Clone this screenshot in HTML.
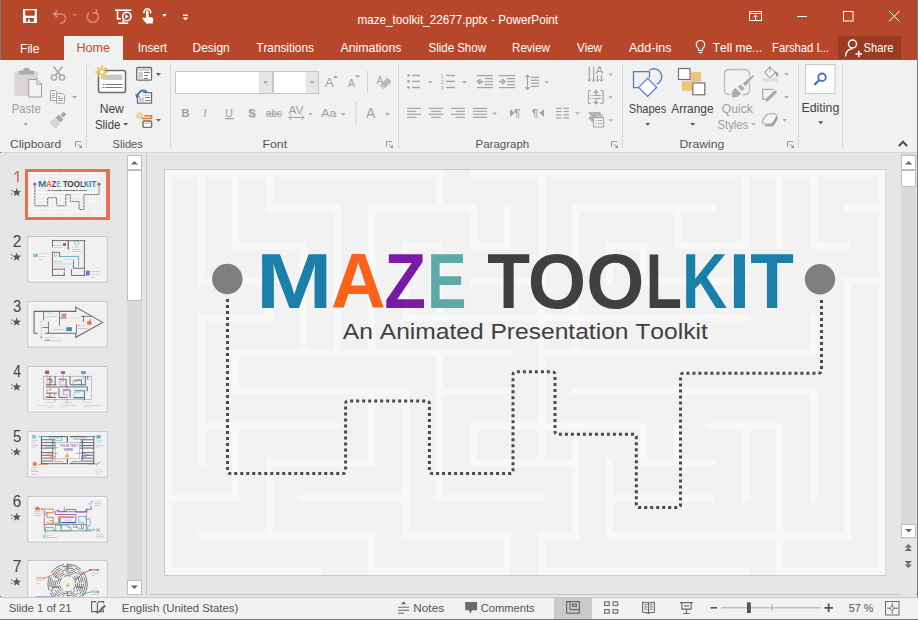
<!DOCTYPE html>
<html><head><meta charset="utf-8">
<style>
html,body{margin:0;padding:0;width:918px;height:620px;overflow:hidden;background:#E6E6E6}
svg{position:absolute;left:0;top:0;font-family:"Liberation Sans",sans-serif}
</style></head><body>
<svg width="918" height="620" viewBox="0 0 918 620">
<rect x="0" y="0" width="918" height="60" fill="#B7472A" />
<rect x="0" y="0" width="1" height="620" fill="#7A7A7A" />
<rect x="23" y="9" width="14" height="14" fill="#fff"/>
<path d="M25.2 10.2h9.6v4.8l-0.8 0.8h-8l-0.8-0.8z" fill="#B7472A"/>
<path d="M26 17.9h7.9v3.9h-3.9v-2.3h-2.1v2.3h-1.9z" fill="#B7472A"/>
<g stroke="#fff" stroke-opacity="0.3" fill="none" stroke-width="2"><path d="M54 14h7a4.5 4.5 0 0 1 0 9h-1"/><path d="M57.5 10.5L54 14l3.5 3.5"/></g>
<path d="M72.5 14h4.5l-2.25 2.48z" fill="rgba(255,255,255,0.3)"/>
<g stroke="#fff" stroke-opacity="0.3" fill="none" stroke-width="2"><path d="M96 12.2A5.6 5.6 0 1 1 89 12.6"/><path d="M96.5 9v4h-4"/></g>
<g stroke="#fff" fill="none" stroke-width="1.6"><path d="M115 10.2h16.5"/><path d="M117.5 10.5v8.3h3.5"/><circle cx="126.8" cy="16.5" r="4.2"/><path d="M118.2 23.2h10"/><path d="M122.5 20.5l1.8 2.5"/></g>
<path d="M125.3 14.3v4.4l3.5-2.2z" fill="#fff"/>
<g fill="none" stroke="#fff" stroke-width="1.5"><path d="M144.2 13.5a3.4 3.4 0 1 1 6.3 0"/></g>
<path d="M146 11.5a1.3 1.3 0 0 1 2.6 0v5.2l3.2 0.8c1 .3 1.6 1 1.5 2.1l-.6 4h-6.2l-3.6-4.2c-.6-.7-.4-1.6.5-1.8l2.6.5z" fill="#fff"/>
<path d="M162 14h4.8l-2.4 2.64z" fill="#fff"/>
<rect x="183" y="14.6" width="5" height="1.4" fill="#fff"/>
<path d="M182.8 17.5h5.4l-2.7 2.97z" fill="#fff"/>
<text transform="translate(357.42 24.20) scale(0.9767 1.0000)" font-size="12" fill="#fff" style="font-kerning:none">maze_toolkit_22677.pptx - PowerPoint</text>
<g fill="none" stroke="#fff" stroke-width="1"><rect x="749.5" y="11.5" width="12" height="9"/><path d="M749.5 13.5h12"/><path d="M755.5 20v-4.5M753.3 17.3l2.2-2.2 2.2 2.2"/><path d="M797 16.5h10"/><rect x="843.5" y="11.5" width="9.5" height="9.5"/><path d="M889 11l10.5 10.5M899.5 11L889 21.5"/></g>
<rect x="64" y="36" width="59" height="24" fill="#F1F1F1" />
<rect x="838" y="36" width="63" height="23" fill="#9A3A22" />
<text transform="translate(20.01 53.00) scale(0.9698 1.0000)" font-size="12.5" fill="#fff" style="font-kerning:none">File</text>
<text transform="translate(76.47 52.00) scale(1.0075 1.0000)" font-size="12.5" fill="#C8482A" style="font-kerning:none">Home</text>
<text transform="translate(137.72 52.00) scale(0.9395 1.0000)" font-size="12.5" fill="#fff" style="font-kerning:none">Insert</text>
<text transform="translate(192.52 52.00) scale(0.9576 1.0000)" font-size="12.5" fill="#fff" style="font-kerning:none">Design</text>
<text transform="translate(256.24 52.00) scale(0.9437 1.0000)" font-size="12.5" fill="#fff" style="font-kerning:none">Transitions</text>
<text transform="translate(340.48 52.00) scale(0.9860 1.0000)" font-size="12.5" fill="#fff" style="font-kerning:none">Animations</text>
<text transform="translate(428.48 52.00) scale(0.9194 1.0000)" font-size="12.5" fill="#fff" style="font-kerning:none">Slide Show</text>
<text transform="translate(512.05 52.00) scale(0.9252 1.0000)" font-size="12.5" fill="#fff" style="font-kerning:none">Review</text>
<text transform="translate(576.95 52.00) scale(0.9236 1.0000)" font-size="12.5" fill="#fff" style="font-kerning:none">View</text>
<text transform="translate(628.98 52.00) scale(1.0022 1.0000)" font-size="12.5" fill="#fff" style="font-kerning:none">Add-ins</text>
<text transform="translate(712.73 52.00) scale(0.9605 1.0000)" font-size="12.5" fill="#fff" style="font-kerning:none">Tell me...</text>
<text transform="translate(772.08 52.00) scale(0.9008 1.0000)" font-size="12.5" fill="#fff" style="font-kerning:none">Farshad I...</text>
<text transform="translate(863.49 52.00) scale(0.8997 1.0000)" font-size="12.5" fill="#fff" style="font-kerning:none">Share</text>
<g fill="none" stroke="#fff" stroke-width="1.2"><path d="M698.6 50.5v-1.7c-1.4-1-2.3-2.4-2.3-4.1a4.2 4.2 0 0 1 8.4 0c0 1.7-.9 3.1-2.3 4.1v1.7z"/><path d="M698.8 52.6h3.4"/></g>
<g fill="none" stroke="#fff" stroke-width="1.5"><circle cx="852.5" cy="44" r="4"/><path d="M845.5 56.5c0-4.5 3-7.5 6.5-7.8"/><path d="M855.5 54h6.5M858.8 50.7v6.5"/></g>
<rect x="0" y="60" width="918" height="92" fill="#F1F1F1" />
<rect x="1" y="152" width="916" height="1" fill="#D6D6D6" />
<rect x="86" y="64" width="1" height="84" fill="#D8D8D8" />
<rect x="170" y="64" width="1" height="84" fill="#D8D8D8" />
<rect x="398" y="64" width="1" height="84" fill="#D8D8D8" />
<rect x="622" y="64" width="1" height="84" fill="#D8D8D8" />
<rect x="798" y="64" width="1" height="84" fill="#D8D8D8" />
<rect x="842" y="64" width="1" height="84" fill="#D8D8D8" />
<text transform="translate(10.09 147.70) scale(1.0654 1.0000)" font-size="11.2" fill="#555" style="font-kerning:none">Clipboard</text>
<text transform="translate(112.49 147.70) scale(0.9969 1.0000)" font-size="11.2" fill="#555" style="font-kerning:none">Slides</text>
<text transform="translate(262.49 147.70) scale(1.0976 1.0000)" font-size="11.2" fill="#555" style="font-kerning:none">Font</text>
<text transform="translate(475.56 147.70) scale(1.0265 1.0000)" font-size="11.2" fill="#555" style="font-kerning:none">Paragraph</text>
<text transform="translate(679.50 147.70) scale(1.0928 1.0000)" font-size="11.2" fill="#555" style="font-kerning:none">Drawing</text>
<g fill="none" stroke="#9a9a9a" stroke-width="1"><path d="M75.5 147v-5.5h5.5"/><path d="M78 144l3.5 3.5"/></g><path d="M78.5 148h3.5v-3.5z" fill="#9a9a9a"/>
<g fill="none" stroke="#9a9a9a" stroke-width="1"><path d="M386.5 147v-5.5h5.5"/><path d="M389 144l3.5 3.5"/></g><path d="M389.5 148h3.5v-3.5z" fill="#9a9a9a"/>
<g fill="none" stroke="#9a9a9a" stroke-width="1"><path d="M611.5 147v-5.5h5.5"/><path d="M614 144l3.5 3.5"/></g><path d="M614.5 148h3.5v-3.5z" fill="#9a9a9a"/>
<g fill="none" stroke="#9a9a9a" stroke-width="1"><path d="M787.5 147v-5.5h5.5"/><path d="M790 144l3.5 3.5"/></g><path d="M790.5 148h3.5v-3.5z" fill="#9a9a9a"/>
<path d="M898.8 146l4.2-4.2 4.2 4.2" fill="none" stroke="#555" stroke-width="2.1"/>
<rect x="14.5" y="71" width="23.5" height="25" rx="2" fill="#D9D5D9"/>
<path d="M19 74.5v-2.8a1.2 1.2 0 0 1 1.2-1.2h3.3v-1.3a1.2 1.2 0 0 1 1.2-1.2h3.6a1.2 1.2 0 0 1 1.2 1.2v1.3h3.3a1.2 1.2 0 0 1 1.2 1.2v2.8z" fill="#ABABAB"/>
<path d="M28.8 79.5h8.2l4.5 4.5v13h-12.7z" fill="#F7F2F7" stroke="#A0A0A0" stroke-width="1"/><path d="M36.8 79.5v4.7h4.7" fill="none" stroke="#A0A0A0"/>
<text transform="translate(11.77 113.20) scale(0.9428 1.0000)" font-size="12" fill="#A0A0A0" style="font-kerning:none">Paste</text>
<path d="M23.2 123h5l-2.5 2.75z" fill="#A8A8A8"/>
<g fill="none" stroke="#A8A8A8" stroke-width="1.4"><circle cx="54" cy="77.5" r="2.6"/><circle cx="62" cy="77.5" r="2.6"/><path d="M55.5 75.3L62.5 66.5M60.5 75.3L53.5 66.5"/></g>
<g fill="#F6F2F6" stroke="#A4A4A4" stroke-width="1"><path d="M50.5 90.5h4.8l1.8 1.8v8.2h-6.6z"/><path d="M56.5 93.5h6l2 2v7.7h-8z"/></g>
<path d="M52 93.5h3M52 95.5h3M52 97.5h3M58 96.5h2M58 98.5h5M58 100.5h5" stroke="#A4A4A4" stroke-width="1"/>
<path d="M72 96h5l-2.5 2.75z" fill="#AAAAAA"/>
<g transform="translate(58.5 119.5) rotate(-45)"><path d="M-8.5 -4.6L-1.5 -3.3V3.3L-8.5 4.6z" fill="#D6D2D6"/><rect x="-1" y="-3.3" width="4.8" height="6.6" fill="#A8A8A8"/><rect x="4.6" y="-1.9" width="4.6" height="3.8" fill="#A8A8A8"/></g>
<rect x="98.5" y="70.5" width="27" height="22" rx="2" fill="#fff" stroke="#6E6E6E" stroke-width="1.6"/>
<rect x="102.5" y="74.5" width="20" height="5.5" fill="#C9C9C9" />
<path d="M102.5 84.5h2M105.5 84.5h17M102.5 87.5h2M105.5 87.5h17" stroke="#7a7a7a" stroke-width="1"/>
<g stroke="#F0C267" stroke-width="1.8" stroke-linecap="butt"><path d="M101.8 65.5v13M95.3 72h13M97.2 67.4l9.2 9.2M106.4 67.4l-9.2 9.2"/></g><circle cx="101.8" cy="72" r="3.2" fill="#F0C267"/><circle cx="101.8" cy="72" r="1.8" fill="#fff"/>
<text transform="translate(99.71 112.90) scale(1.0065 1.0000)" font-size="12" fill="#444" style="font-kerning:none">New</text>
<text transform="translate(94.88 128.70) scale(0.9568 1.0000)" font-size="12" fill="#444" style="font-kerning:none">Slide</text>
<path d="M123.3 123h4.8l-2.4 2.64z" fill="#555"/>
<rect x="136.7" y="67.5" width="14.8" height="12.6" rx="1.2" fill="#fff" stroke="#6E6E6E" stroke-width="1.3"/>
<rect x="138.3" y="69.1" width="11.8" height="1.7" fill="#C8C8C8" />
<rect x="138.2" y="72.1" width="4.6" height="6.5" fill="#CBCBCB" />
<path d="M144 72.5h5.8M144 75.5h4M144 78.4h4" stroke="#7a7a7a" stroke-width="1"/>
<path d="M155.7 73.1h5.4l-2.7 2.97z" fill="#666"/>
<path d="M143 92.6h8.5v10.6h-14v-6" fill="#fff" stroke="#6E6E6E" stroke-width="1.3"/>
<rect x="139" y="97.3" width="5" height="4.4" fill="#CBCBCB" />
<rect x="143" y="94.6" width="7" height="1.3" fill="#C8C8C8" />
<path d="M145 97.5h5M145 100.5h5" stroke="#7a7a7a" stroke-width="1"/>
<path d="M137.6 95.2c1.5-3 3.5-4.6 6-4.6 1.6 0 2.6.9 3.2 2.6" fill="none" stroke="#3F78C0" stroke-width="2"/><path d="M135.3 93.6l0.9 4.6 4.2-1.8z" fill="#3F78C0"/>
<g stroke="#F0C070" stroke-width="1.1"><path d="M139.5 112v7.2M135.9 115.6h7.2M137 113.1l5 5M142 113.1l-5 5"/></g><circle cx="139.5" cy="115.6" r="1.6" fill="#fff" stroke="#F0C070" stroke-width="1"/>
<path d="M144.2 115.8h7.3v2.8h-9.5" fill="none" stroke="#E87722" stroke-width="1.5"/>
<rect x="143" y="121" width="8.6" height="6.4" rx="1" fill="#fff" stroke="#6E6E6E" stroke-width="1.4"/>
<rect x="144.2" y="122.4" width="5.6" height="1.8" fill="#C8C8C8" />
<path d="M155.9 119h5l-2.5 2.75z" fill="#666"/>
<rect x="175.5" y="71.5" width="96.5" height="22" fill="#fff" stroke="#C6C6C6"/>
<rect x="259.5" y="72" width="12" height="21" fill="#E6E6E6" />
<rect x="259" y="72" width="1" height="21" fill="#E0E0E0" />
<path d="M263 81.2h5l-2.5 2.75z" fill="#A8A8A8"/>
<rect x="273.5" y="71.5" width="45" height="22" fill="#fff" stroke="#C6C6C6"/>
<rect x="305.5" y="72" width="12.5" height="21" fill="#E6E6E6" />
<path d="M309.5 81.2h5l-2.5 2.75z" fill="#A8A8A8"/>
<rect x="272" y="72" width="1.5" height="21" fill="#C6C6C6" />
<text x="325" y="87.4" font-size="13" fill="#A0A0A0">A</text><path d="M333 78l2.6-2.6 2.6 2.6z" fill="#A0A0A0"/>
<text x="348" y="87.4" font-size="10.5" fill="#A0A0A0">A</text><path d="M355 75.2h5.2l-2.6 2.6z" fill="#A0A0A0"/>
<rect x="367" y="71" width="1" height="22" fill="#D0D0D0" />
<text x="376.5" y="84" font-size="10" fill="#A0A0A0">A</text><path d="M381 84l6.5-6.5 4 4-6.5 6.5z" fill="#B8B8B8"/><path d="M379.5 85.5l1.5-1.5 4 4-1.5 1.5z" fill="#C8C8C8"/>
<text x="181.5" y="117" font-size="11" font-weight="bold" fill="#A0A0A0">B</text>
<text x="203.5" y="117" font-size="11" font-style="italic" fill="#A0A0A0">I</text>
<text x="225" y="117" font-size="11" fill="#A0A0A0">U</text>
<rect x="225" y="118" width="9" height="1.2" fill="#A0A0A0" />
<text x="249.3" y="118" font-size="11" font-weight="bold" fill="#D0D0D0">S</text><text x="248.3" y="117" font-size="11" font-weight="bold" fill="#A0A0A0">S</text>
<text x="266" y="117" font-size="10" fill="#A0A0A0" textLength="16" lengthAdjust="spacingAndGlyphs">abc</text>
<rect x="266" y="113.5" width="16.5" height="1" fill="#A0A0A0" />
<text x="288.5" y="113.6" font-size="10" fill="#A0A0A0" textLength="15" lengthAdjust="spacingAndGlyphs">AV</text><path d="M289 117.5h15M291.5 115l-2.5 2.5 2.5 2.5M301.5 115l2.5 2.5-2.5 2.5" fill="none" stroke="#A0A0A0" stroke-width="1"/>
<path d="M308.2 112.9h4.6l-2.3 2.53z" fill="#B0B0B0"/>
<text x="321.3" y="116.7" font-size="11.5" fill="#A0A0A0" textLength="15" lengthAdjust="spacingAndGlyphs">Aa</text>
<path d="M340.8 112.9h5l-2.5 2.75z" fill="#B0B0B0"/>
<rect x="355.5" y="102" width="1" height="22" fill="#D0D0D0" />
<text x="366" y="118" font-size="14" fill="#A0A0A0">A</text>
<path d="M385 112.9h5l-2.5 2.75z" fill="#B0B0B0"/>
<circle cx="408.5" cy="75.5" r="1.3" fill="#A4A4A4"/>
<rect x="412" y="74.8" width="8" height="1.4" fill="#A4A4A4" />
<circle cx="408.5" cy="81.4" r="1.3" fill="#A4A4A4"/>
<rect x="412" y="80.7" width="8" height="1.4" fill="#A4A4A4" />
<circle cx="408.5" cy="87.5" r="1.3" fill="#A4A4A4"/>
<rect x="412" y="86.8" width="8" height="1.4" fill="#A4A4A4" />
<path d="M428.1 81h4.6l-2.3 2.53z" fill="#B0B0B0"/>
<text x="440.5" y="78.3" font-size="6" fill="#A4A4A4">1</text>
<rect x="446" y="74.8" width="9" height="1.4" fill="#A4A4A4" />
<text x="440.5" y="84.2" font-size="6" fill="#A4A4A4">2</text>
<rect x="446" y="80.7" width="9" height="1.4" fill="#A4A4A4" />
<text x="440.5" y="90.3" font-size="6" fill="#A4A4A4">3</text>
<rect x="446" y="86.8" width="9" height="1.4" fill="#A4A4A4" />
<path d="M462 81h5l-2.5 2.75z" fill="#B0B0B0"/>
<rect x="477" y="75" width="16" height="1.2" fill="#A4A4A4" />
<rect x="477" y="87" width="16" height="1.2" fill="#A4A4A4" />
<rect x="485" y="78" width="8" height="1.2" fill="#A4A4A4" />
<rect x="485" y="81" width="8" height="1.2" fill="#A4A4A4" />
<rect x="485" y="84" width="8" height="1.2" fill="#A4A4A4" />
<path d="M483.5 81.6h-4M480.5 79l-3 2.6 3 2.6" fill="none" stroke="#A4A4A4" stroke-width="1.6"/>
<rect x="499" y="75" width="16" height="1.2" fill="#A4A4A4" />
<rect x="499" y="87" width="16" height="1.2" fill="#A4A4A4" />
<rect x="507" y="78" width="8" height="1.2" fill="#A4A4A4" />
<rect x="507" y="81" width="8" height="1.2" fill="#A4A4A4" />
<rect x="507" y="84" width="8" height="1.2" fill="#A4A4A4" />
<path d="M499 81.6h4M502 79l3 2.6-3 2.6" fill="none" stroke="#A4A4A4" stroke-width="1.6"/>
<path d="M527.5 75v14.5M525.3 77.3l2.2-2.3 2.2 2.3M525.3 87.2l2.2 2.3 2.2-2.3" fill="none" stroke="#A4A4A4" stroke-width="1.2"/>
<rect x="531" y="76.80000000000001" width="8" height="1.2" fill="#A4A4A4" />
<rect x="531" y="79.7" width="8" height="1.2" fill="#A4A4A4" />
<rect x="531" y="82.7" width="8" height="1.2" fill="#A4A4A4" />
<rect x="531" y="85.80000000000001" width="8" height="1.2" fill="#A4A4A4" />
<path d="M544.2 81.3h4.6l-2.3 2.53z" fill="#B0B0B0"/>
<path d="M589.3 67v14M593.6 67v14M597.5 75v6.5M601.5 75v6.5" stroke="#A4A4A4" stroke-width="1.2"/>
<path d="M587.8 79.5l1.5 2 1.5-2M592.1 79.5l1.5 2 1.5-2M596 79.5l1.5 2 1.5-2M600 79.5l1.5 2 1.5-2" fill="none" stroke="#A4A4A4" stroke-width="1"/>
<text transform="translate(595.78 74.20) scale(1.1160 1.1483)" font-size="10" fill="#A4A4A4" style="font-kerning:none">A</text>
<path d="M608.3 73.5h4.6l-2.3 2.53z" fill="#B0B0B0"/>
<path d="M591 90.5h-2.5v13h2.5M600.5 90.5h2.5v13h-2.5" fill="none" stroke="#A4A4A4" stroke-width="1"/>
<rect x="589" y="91" width="14" height="12" fill="#F4EEF4" />
<path d="M591 90.5h-2.5v13h2.5M600.5 90.5h2.5v13h-2.5" fill="none" stroke="#A4A4A4" stroke-width="1"/>
<path d="M596 90.5v4.5M593.8 92.8l2.2-2.2 2.2 2.2M596 99.5v4.5M593.8 101.8l2.2 2.2 2.2-2.2M592.8 95.5h8M592.8 98.5h8" fill="none" stroke="#A4A4A4" stroke-width="1.2"/><rect x="590" y="95" width="1" height="1" fill="#A4A4A4"/><rect x="590" y="98" width="1" height="1" fill="#A4A4A4"/>
<path d="M608.3 96.2h4.6l-2.3 2.53z" fill="#B0B0B0"/>
<path d="M588 112h12l3.5 4.5h-8v6.5h-2l-5.5-4.5 3-2.5z" fill="#B4B4B4"/>
<rect x="593.5" y="117.5" width="10" height="9.5" fill="#F4EEF4" stroke="#A4A4A4" stroke-width="1"/><path d="M595.5 120.5h1M598 120.5h4M595.5 123.5h1M598 123.5h4" stroke="#A4A4A4" stroke-width="0.9"/>
<path d="M608.3 119.3h4.6l-2.3 2.53z" fill="#B0B0B0"/>
<rect x="407" y="107.80000000000001" width="14" height="1.2" fill="#A4A4A4" />
<rect x="407" y="110.7" width="9.5" height="1.2" fill="#A4A4A4" />
<rect x="407" y="113.7" width="14" height="1.2" fill="#A4A4A4" />
<rect x="407" y="116.7" width="9.5" height="1.2" fill="#A4A4A4" />
<rect x="429.0" y="107.80000000000001" width="14" height="1.2" fill="#A4A4A4" />
<rect x="431.25" y="110.7" width="9.5" height="1.2" fill="#A4A4A4" />
<rect x="429.0" y="113.7" width="14" height="1.2" fill="#A4A4A4" />
<rect x="431.25" y="116.7" width="9.5" height="1.2" fill="#A4A4A4" />
<rect x="451" y="107.80000000000001" width="14" height="1.2" fill="#A4A4A4" />
<rect x="455.5" y="110.7" width="9.5" height="1.2" fill="#A4A4A4" />
<rect x="451" y="113.7" width="14" height="1.2" fill="#A4A4A4" />
<rect x="455.5" y="116.7" width="9.5" height="1.2" fill="#A4A4A4" />
<rect x="473" y="107.80000000000001" width="14" height="1.2" fill="#A4A4A4" />
<rect x="473" y="110.7" width="14" height="1.2" fill="#A4A4A4" />
<rect x="473" y="113.7" width="14" height="1.2" fill="#A4A4A4" />
<rect x="473" y="116.7" width="14" height="1.2" fill="#A4A4A4" />
<path d="M492.2 112.4h4.8l-2.4 2.64z" fill="#B0B0B0"/>
<path d="M510 109v8l4.5-4z" fill="#A4A4A4"/><text x="514" y="117" font-size="11" font-weight="bold" fill="#A4A4A4">¶</text>
<path d="M544 109v8l-4.5-4z" fill="#A4A4A4"/><text x="532" y="117" font-size="11" font-weight="bold" fill="#A4A4A4">¶</text>
<rect x="556" y="107.7" width="5.5" height="1.2" fill="#A4A4A4" />
<rect x="563.5" y="107.7" width="5.5" height="1.2" fill="#A4A4A4" />
<rect x="556" y="110.9" width="5.5" height="1.2" fill="#A4A4A4" />
<rect x="563.5" y="110.9" width="5.5" height="1.2" fill="#A4A4A4" />
<rect x="556" y="114.2" width="5.5" height="1.2" fill="#A4A4A4" />
<rect x="563.5" y="114.2" width="5.5" height="1.2" fill="#A4A4A4" />
<rect x="556" y="117.4" width="5.5" height="1.2" fill="#A4A4A4" />
<rect x="563.5" y="117.4" width="5.5" height="1.2" fill="#A4A4A4" />
<path d="M575 112.3h4.8l-2.4 2.64z" fill="#B0B0B0"/>
<path d="M649.5 71.6h-16v16h4.8" fill="none" stroke="#4A80C4" stroke-width="1.3"/>
<path d="M649.5 71.6v6.5" fill="none" stroke="#4A80C4" stroke-width="1.3"/>
<path d="M649.2 70.3A7.9 7.9 0 1 1 656.8 84" fill="none" stroke="#4A80C4" stroke-width="1.3"/>
<path d="M647.6 78.4l9 9-9 9-9-9z" fill="#fff" stroke="#4A80C4" stroke-width="1.3"/>
<text transform="translate(628.80 112.90) scale(0.9214 1.0000)" font-size="12" fill="#444" style="font-kerning:none">Shapes</text>
<path d="M645.3 123h4.8l-2.4 2.64z" fill="#555"/>
<rect x="678.5" y="68.5" width="11.5" height="11" fill="#fff" stroke="#707070" stroke-width="1.2"/>
<rect x="691" y="72" width="10" height="9.8" fill="#ECC47A" />
<rect x="682" y="81.2" width="10.2" height="9.6" fill="#ECC47A" />
<rect x="692.8" y="83" width="12" height="11.8" fill="#fff" stroke="#707070" stroke-width="1.2"/>
<text transform="translate(671.28 112.90) scale(0.9897 1.0000)" font-size="12" fill="#444" style="font-kerning:none">Arrange</text>
<path d="M690.2 123h5l-2.5 2.75z" fill="#555"/>
<rect x="724.5" y="69.5" width="25" height="25" rx="4.5" fill="#F4F0F4" stroke="#B8B8B8" stroke-width="1.3"/>
<g transform="translate(742 87) rotate(-45)"><path d="M-15 0c2-4 6-5 9-5l1.5 0v10l-1.5 0c-3 0-7-1-9-5z" fill="#ABABAB" stroke="#F1F1F1" stroke-width="1.6"/><rect x="-3.5" y="-3.6" width="5" height="7.2" fill="#ABABAB" stroke="#F1F1F1" stroke-width="1.4"/><path d="M2.5 -2.6L17 -1.2V1.2L2.5 2.6z" fill="#ABABAB" stroke="#F1F1F1" stroke-width="1.2"/></g>
<text transform="translate(721.82 112.70) scale(1.0158 1.0000)" font-size="12" fill="#A0A0A0" style="font-kerning:none">Quick</text>
<text transform="translate(717.59 128.60) scale(0.9401 1.0000)" font-size="12" fill="#A0A0A0" style="font-kerning:none">Styles</text>
<path d="M751.1 122.9h4.8l-2.4 2.64z" fill="#B0B0B0"/>
<path d="M770 67.2l5.2 5.2-5.2 5.2-5.2-5.2z" fill="#fff" stroke="#A8A8A8" stroke-width="1.2"/><path d="M769.8 66.5v6" stroke="#A8A8A8" stroke-width="1.2"/><path d="M774.6 71.2c2 0 3.8 1.6 3.8 3.2 0 1.2-.6 2.2-1.6 2.6z" fill="#A0A0A0"/>
<rect x="762.2" y="77.9" width="15.8" height="3.8" fill="#E4DEE4" />
<path d="M784.1 73h4.8l-2.4 2.64z" fill="#B0B0B0"/>
<path d="M773.4 89.4h-10.7v9.9h4.6" fill="none" stroke="#A8A8A8" stroke-width="1.2"/><path d="M766.3 98.6l8.6-8.6 2.2 2.2-8.6 8.6-2.9.8z" fill="#A8A8A8"/>
<path d="M784.1 96h4.8l-2.4 2.64z" fill="#B0B0B0"/>
<path d="M763.5 123.5c-1.4-1.2-1.2-3 .2-4.8l2.8-3.5c.9-1 1.9-1.4 3.2-1.4h4.3c2.2 0 3.2 1.8 2.2 3.5l-2.6 4.4c-.8 1.6-2 2.4-3.6 2.4h-4.5c-.8 0-1.4-.2-2-.6z" fill="#F4F0F4" stroke="#A8A8A8" stroke-width="1.1"/><path d="M769.8 124.6c1.6 0 2.8-.8 3.6-2.4l2.6-4.4c.5-.9.5-1.8.1-2.6l1.2 1.4c.6.8.6 1.9.1 2.9l-2.8 4.7c-.9 1.5-2.2 2.3-3.8 2.3h-4.8c-.8 0-1.4-.3-1.9-.8z" fill="#A0A0A0"/>
<path d="M782.3 119h4.8l-2.4 2.64z" fill="#B0B0B0"/>
<rect x="805.5" y="64.5" width="29.5" height="29" fill="#FDFDFD" stroke="#C9C9C9" stroke-width="1"/>
<circle cx="822" cy="77.3" r="3.8" fill="none" stroke="#3F70B6" stroke-width="1.8"/><path d="M819.3 80l-4.3 4.2" stroke="#3F70B6" stroke-width="2.3" stroke-linecap="round"/>
<text transform="translate(801.49 111.60) scale(1.0305 1.0000)" font-size="12" fill="#444" style="font-kerning:none">Editing</text>
<path d="M818.1 121.3h5.2l-2.6 2.86z" fill="#555"/>
<rect x="0" y="153" width="918" height="443" fill="#E6E6E6" />
<rect x="146" y="153" width="1" height="442" fill="#C8C8C8" />
<rect x="149" y="594" width="769" height="1" fill="#C6C6C6" />
<rect x="127" y="155" width="15" height="440" fill="#DADADA" />
<rect x="127.5" y="155.5" width="14" height="14" fill="#fff" stroke="#BFBFBF"/>
<path d="M130.8 164.5h7.2l-3.6-3.6z" fill="#666"/>
<rect x="127.5" y="170.5" width="14" height="130" fill="#fff" stroke="#BFBFBF"/>
<rect x="127.5" y="580.5" width="14" height="14" fill="#fff" stroke="#BFBFBF"/>
<path d="M130.8 585.5h7.2l-3.6 3.6z" fill="#666"/>
<rect x="901" y="153" width="15" height="443" fill="#DADADA" />
<rect x="901.5" y="155.5" width="14" height="14" fill="#fff" stroke="#BFBFBF"/>
<path d="M905 164.5h7.2l-3.6-3.6z" fill="#666"/>
<rect x="901.5" y="170.5" width="14" height="16" fill="#fff" stroke="#BFBFBF"/>
<rect x="901.5" y="524.5" width="14" height="13" fill="#fff" stroke="#BFBFBF"/>
<path d="M905 529h7.2l-3.6 3.6z" fill="#666"/>
<rect x="901" y="539" width="15" height="57" fill="#E6E6E6" />
<path d="M904.7 547.5l3.6-3.6 3.6 3.6zM904.7 551l3.6-3.6 3.6 3.6z" fill="#666"/>
<path d="M904.7 561l3.6 3.6 3.6-3.6zM904.7 564.5l3.6 3.6 3.6-3.6z" fill="#666"/>
<rect x="917" y="0" width="1" height="620" fill="#7A7A7A" />
<rect x="25" y="169" width="85" height="51" fill="#E9704E"/>
<g transform="translate(28 172) scale(0.1082 0.1108)"><rect x="1" y="1" width="720" height="405" fill="#EFEFEF"/>
<rect x="1" y="1" width="278" height="7" fill="#FCFCFC"/>
<rect x="306" y="1" width="415" height="7" fill="#FCFCFC"/>
<rect x="1" y="1" width="7" height="405" fill="#FCFCFC"/>
<rect x="715" y="1" width="6" height="405" fill="#FCFCFC"/>
<rect x="1" y="399" width="156" height="7" fill="#FCFCFC"/>
<rect x="204" y="399" width="143" height="7" fill="#FCFCFC"/>
<rect x="374" y="399" width="211" height="7" fill="#FCFCFC"/>
<rect x="612" y="399" width="109" height="7" fill="#FCFCFC"/>
<path d="M37.5 4.5L37.5 112.31M105.5 112.31L105.5 148.58M71.5 4.5L71.5 76.04M139.5 76.04L139.5 184.85M105.5 4.5L105.5 39.77M173.5 39.77L173.5 184.85M207.5 39.77L207.5 184.85M275.5 4.5L275.5 39.77M309.5 39.77L309.5 76.04M343.5 39.77L343.5 76.04M377.5 4.5L377.5 112.31M411.5 39.77L411.5 184.85M513.5 39.77L513.5 76.04M445.5 76.04L445.5 112.31M479.5 76.04L479.5 112.31M581.5 4.5L581.5 76.04M615.5 4.5L615.5 76.04M649.5 4.5L649.5 76.04M683.5 112.31L683.5 366.2M37.5 148.58L37.5 257.39M71.5 184.85L71.5 221.12M275.5 184.85L275.5 329.93M377.5 112.31L377.5 293.66M649.5 148.58L649.5 184.85M649.5 221.12L649.5 329.93M37.5 257.39L37.5 293.66M71.5 257.39L71.5 329.93M105.5 293.66L105.5 366.2M207.5 221.12L207.5 293.66M241.5 76.04L241.5 148.58M275.5 76.04L275.5 148.58M207.5 366.2L207.5 401.5M241.5 221.12L241.5 366.2M309.5 257.39L309.5 293.66M343.5 366.2L343.5 401.5M411.5 257.39L411.5 366.2M479.5 257.39L479.5 293.66M513.5 257.39L513.5 293.66M445.5 293.66L445.5 366.2M377.5 366.2L377.5 401.5M581.5 257.39L581.5 329.93M615.5 257.39L615.5 401.5M37.5 112.31L105.5 112.31M71.5 76.04L139.5 76.04M105.5 39.77L173.5 39.77M207.5 39.77L309.5 39.77M309.5 76.04L343.5 76.04M241.5 76.04L275.5 76.04M309.5 112.31L377.5 112.31M411.5 39.77L547.5 39.77M513.5 76.04L581.5 76.04M445.5 76.04L479.5 76.04M479.5 112.31L581.5 112.31M649.5 76.04L683.5 76.04M683.5 39.77L716.5 39.77M683.5 112.31L716.5 112.31M37.5 148.58L105.5 148.58M71.5 184.85L343.5 184.85M71.5 221.12L241.5 221.12M37.5 257.39L173.5 257.39M309.5 257.39L479.5 257.39M547.5 257.39L615.5 257.39M241.5 148.58L581.5 148.58M377.5 184.85L649.5 184.85M275.5 221.12L343.5 221.12M411.5 221.12L649.5 221.12M4.5 329.93L71.5 329.93M105.5 293.66L207.5 293.66M139.5 329.93L241.5 329.93M37.5 366.2L207.5 366.2M241.5 366.2L343.5 366.2M275.5 329.93L377.5 329.93M309.5 293.66L411.5 293.66M479.5 293.66L547.5 293.66M445.5 329.93L547.5 329.93M377.5 366.2L411.5 366.2M445.5 366.2L683.5 366.2" stroke="#FCFCFC" stroke-width="7" stroke-linecap="square" fill="none"/>
<path d="M63.50 130.00 L63.50 301.50 Q63.50 304.50 66.50 304.50 L178.60 304.50 Q181.60 304.50 181.60 301.50 L181.60 234.90 Q181.60 231.90 184.60 231.90 L262.40 231.90 Q265.40 231.90 265.40 234.90 L265.40 301.50 Q265.40 304.50 268.40 304.50 L346.00 304.50 Q349.00 304.50 349.00 301.50 L349.00 205.80 Q349.00 202.80 352.00 202.80 L388.00 202.80 Q391.00 202.80 391.00 205.80 L391.00 262.30 Q391.00 265.30 394.00 265.30 L469.30 265.30 Q472.30 265.30 472.30 268.30 L472.30 335.50 Q472.30 338.50 475.30 338.50 L513.50 338.50 Q516.50 338.50 516.50 335.50 L516.50 207.20 Q516.50 204.20 519.50 204.20 L654.50 204.20 Q657.50 204.20 657.50 201.20 L657.50 130.00" fill="none" stroke="#707070" stroke-width="9" stroke-dasharray="22 6"/>
<circle cx="63.30000000000001" cy="110" r="15.2" fill="#7F7F7F"/>
<circle cx="656" cy="110.30000000000001" r="15.2" fill="#7F7F7F"/>
<text transform="translate(92.06 138.60) scale(1.2408 1.0548)" font-size="74" fill="#1B80A9" font-weight="bold" style="font-kerning:none">M</text>
<text transform="translate(167.01 138.60) scale(1.0232 1.0548)" font-size="74" fill="#FB6118" font-weight="bold" style="font-kerning:none">A</text>
<text transform="translate(220.27 138.60) scale(0.9225 1.0548)" font-size="74" fill="#781CA8" font-weight="bold" style="font-kerning:none">Z</text>
<text transform="translate(263.18 138.60) scale(0.7925 1.0548)" font-size="74" fill="#5DAAA9" font-weight="bold" style="font-kerning:none">E</text>
<text transform="translate(323.21 138.60) scale(0.9455 1.0548)" font-size="74" fill="#404040" font-weight="bold" style="font-kerning:none">T</text>
<text transform="translate(363.72 138.60) scale(1.0152 1.0548)" font-size="74" fill="#404040" font-weight="bold" style="font-kerning:none">O</text>
<text transform="translate(422.34 138.60) scale(1.0094 1.0548)" font-size="74" fill="#404040" font-weight="bold" style="font-kerning:none">O</text>
<text transform="translate(481.84 138.60) scale(0.8005 1.0548)" font-size="74" fill="#404040" font-weight="bold" style="font-kerning:none">L</text>
<text transform="translate(518.11 138.60) scale(0.8472 1.0548)" font-size="74" fill="#1B80A9" font-weight="bold" style="font-kerning:none">K</text>
<text transform="translate(564.75 138.60) scale(1.0414 1.0548)" font-size="74" fill="#1B80A9" font-weight="bold" style="font-kerning:none">I</text>
<text transform="translate(586.20 138.60) scale(0.9661 1.0548)" font-size="74" fill="#1B80A9" font-weight="bold" style="font-kerning:none">T</text>
<text stroke="#5A5A5A" stroke-width="1.5" transform="translate(178.85 170.40) scale(1.0694 0.9480)" font-size="23" fill="#5A5A5A" style="font-kerning:none">An Animated Presentation Toolkit</text></g>
<path d="M17.9 171v11M17.9 171.4l-3.6 3" fill="none" stroke="#D24726" stroke-width="1.2"/>
<polygon points="16.70,188.00 17.88,190.98 21.07,191.18 18.60,193.22 19.40,196.32 16.70,194.60 14.00,196.32 14.80,193.22 12.33,191.18 15.52,190.98" fill="#5A5A5A"/>
<rect x="11.00" y="190.00" width="1.3" height="1.1" fill="#6A6A6A"/><rect x="11.00" y="193.40" width="1.3" height="1.1" fill="#6A6A6A"/>
<defs><clipPath id="clip7"><rect x="0" y="0" width="918" height="425"/></clipPath></defs><g transform="translate(24 232) scale(0.09588)"><rect x="35" y="42" width="838" height="485" fill="#C6C6C6"/><rect x="46" y="53" width="816" height="463" fill="#FAFAFA"/><rect x="62" y="68" width="784" height="433" fill="#F1F1F1"/><path d="M297 88L297 155M297 210L297 455M297 90L635 90M630 90L630 378M297 453L420 453M495 453L635 453M630 400L630 453M297 212L372 212L372 255M515 300L515 378L630 378M297 388L405 388M420 378L420 405M495 395L495 440M420 425L420 453" fill="none" stroke="#5E5E5E" stroke-width="9" stroke-linecap="square"/><rect x="455" y="90" width="12" height="95" fill="#5E5E5E"/><path d="M372 255L570 255L570 355" fill="none" stroke="#3E9BC2" stroke-width="8" stroke-linecap="square"/><rect x="405" y="322" width="105" height="20" fill="#D6E6EC"/><rect x="95" y="228" width="45" height="30" fill="#5AA5C8"/><rect x="103" y="236" width="14" height="14" fill="#EAF4F8"/><rect x="645" y="403" width="40" height="50" fill="#9A63C8"/><rect x="408" y="115" width="30" height="30" fill="#C0504D"/><path d="M525 100h45v25l-22 18-23-18z" fill="none" stroke="#6AB8B5" stroke-width="7"/><path d="M320 228a14 16 0 1 0 22 2" fill="none" stroke="#E5824F" stroke-width="7"/><rect x="305" y="140" width="90" height="6" fill="#A9A9A9"/><rect x="305" y="160" width="100" height="6" fill="#C6B9A8"/><rect x="500" y="180" width="90" height="6" fill="#B0B0B0"/><rect x="500" y="200" width="100" height="6" fill="#B8A8C0"/><rect x="305" y="305" width="90" height="6" fill="#A9A9A9"/><rect x="305" y="330" width="100" height="6" fill="#B8B8B8"/><rect x="150" y="220" width="95" height="6" fill="#B6CCD8"/><rect x="150" y="252" width="90" height="6" fill="#C8C8B8"/><rect x="150" y="282" width="45" height="6" fill="#A6B0C8"/><rect x="690" y="410" width="100" height="6" fill="#B8A8C8"/><rect x="690" y="440" width="100" height="6" fill="#C8C8C8"/><rect x="700" y="470" width="40" height="6" fill="#C0C0C0"/><rect x="420" y="283" width="110" height="6" fill="#C6C6C6"/><rect x="305" y="355" width="110" height="6" fill="#D0C8C0"/><rect x="500" y="155" width="70" height="6" fill="#9ED0CC"/></g>
<g transform="translate(24 297) scale(0.09588)"><rect x="35" y="42" width="838" height="485" fill="#C6C6C6"/><rect x="46" y="53" width="816" height="463" fill="#FAFAFA"/><rect x="62" y="68" width="784" height="433" fill="#F1F1F1"/><path d="M220 378H540V420L820 265L540 105V150H105V378H145" fill="none" stroke="#686868" stroke-width="11"/><path d="M370 150L370 295M370 220L440 220M255 262L255 378M200 318L255 318M205 150L205 240M600 202L700 202M620 202L620 255M548 290L548 378" fill="none" stroke="#6A6A6A" stroke-width="9" stroke-linecap="square"/><path d="M180 250V430" stroke="#8A8A8A" stroke-width="6" stroke-dasharray="18 14"/><rect x="392" y="172" width="48" height="38" fill="#D9A0A8"/><rect x="400" y="180" width="6" height="28" fill="#C0504D"/><rect x="414" y="186" width="6" height="22" fill="#C0504D"/><rect x="428" y="176" width="6" height="32" fill="#C0504D"/><rect x="440" y="315" width="60" height="40" fill="#3F8FB5"/><path d="M660 255h18l8-25 10 5-4 20h12v35h-44z" fill="#E0693A"/><rect x="565" y="290" width="15" height="12" fill="#E07030"/><rect x="215" y="445" width="55" height="14" fill="#B58AD0"/><rect x="175" y="405" width="10" height="25" fill="#A878C8"/><rect x="225" y="200" width="115" height="6" fill="#B8B8C0"/><rect x="305" y="338" width="110" height="6" fill="#B8B0B0"/><rect x="460" y="215" width="120" height="6" fill="#C8C8C8"/><rect x="565" y="325" width="95" height="6" fill="#A0A0B8"/><rect x="280" y="455" width="115" height="6" fill="#B0B8B8"/><rect x="220" y="420" width="90" height="6" fill="#C8B8D8"/><rect x="235" y="165" width="60" height="6" fill="#C0C0C8"/><rect x="600" y="293" width="40" height="6" fill="#F0A890"/></g>
<g transform="translate(24 362) scale(0.09588)"><rect x="35" y="42" width="838" height="485" fill="#C6C6C6"/><rect x="46" y="53" width="816" height="463" fill="#FAFAFA"/><rect x="62" y="68" width="784" height="433" fill="#F1F1F1"/><rect x="202" y="148" width="505" height="244" fill="none" stroke="#8A8A8A" stroke-width="5"/><path d="M232 237L335 237M270 152L270 237M250 180L290 180L290 212M365 180L440 180L440 260M325 152L325 237M480 152L480 237L640 237M520 190L600 190L600 237M640 152L640 237M232 260L640 260M232 325L340 325M270 325L270 370M365 280L365 370L440 370M410 292L480 292L480 370M530 300L630 300L630 390M520 370L630 370M665 152L665 180M232 370L330 370M660 260L660 300" fill="none" stroke="#5A5A5A" stroke-width="9" stroke-linecap="square"/><path d="M240 140L240 250L280 250L280 290L240 290L240 330L320 330L320 410M230 360L290 360" fill="none" stroke="#D88088" stroke-width="7" stroke-linecap="square"/><path d="M410 140L410 200L370 200L370 240L450 240L450 300L410 300L410 340L450 340L450 410" fill="none" stroke="#B080D0" stroke-width="7" stroke-linecap="square"/><path d="M620 140L620 180L560 180L560 200L510 200L510 250L650 250L650 300L580 300L580 320L520 320L520 380L620 380L620 410" fill="none" stroke="#7AB8D8" stroke-width="7" stroke-linecap="square"/><path d="M220 90h42v35h-42z" fill="#C0504D"/><path d="M385 95h43v30h-43z" fill="#9A5FC8"/><path d="M595 95h50v30h-50z" fill="#5AA5C8"/><rect x="220" y="418" width="95" height="6" fill="#E8B8B8"/><rect x="145" y="448" width="170" height="6" fill="#D0C8B8"/><rect x="250" y="468" width="70" height="6" fill="#C8D0D8"/><rect x="410" y="418" width="90" height="6" fill="#C8B8E0"/><rect x="375" y="448" width="175" height="6" fill="#C8C0B0"/><rect x="375" y="468" width="70" height="6" fill="#D0D0D0"/><rect x="630" y="418" width="95" height="6" fill="#B0D0E0"/><rect x="630" y="448" width="175" height="6" fill="#C0C0C0"/><rect x="630" y="468" width="70" height="6" fill="#D0D0D8"/></g>
<g transform="translate(24 427) scale(0.09588)"><rect x="35" y="42" width="838" height="485" fill="#C6C6C6"/><rect x="46" y="53" width="816" height="463" fill="#FAFAFA"/><rect x="62" y="68" width="784" height="433" fill="#F1F1F1"/><rect x="182" y="98" width="546" height="286" fill="#F4F4F4"/><path d="M182 100L435 100M480 100L728 100M182 382L435 382M480 382L728 382M182 100L182 240M182 255L182 382M728 100L728 240M728 255L728 382" fill="none" stroke="#555" stroke-width="10" stroke-linecap="square"/><rect x="446" y="95" width="12" height="60" fill="#555"/><rect x="446" y="330" width="12" height="60" fill="#555"/><rect x="186" y="128" width="140" height="10" fill="#666"/><rect x="582" y="128" width="142" height="10" fill="#666"/><rect x="186" y="158" width="140" height="10" fill="#666"/><rect x="582" y="158" width="142" height="10" fill="#666"/><rect x="186" y="188" width="140" height="10" fill="#666"/><rect x="582" y="188" width="142" height="10" fill="#666"/><rect x="186" y="215" width="140" height="10" fill="#666"/><rect x="582" y="215" width="142" height="10" fill="#666"/><rect x="186" y="262" width="120" height="10" fill="#6a6a6a"/><rect x="600" y="262" width="124" height="10" fill="#6a6a6a"/><rect x="186" y="290" width="120" height="10" fill="#6a6a6a"/><rect x="600" y="290" width="124" height="10" fill="#6a6a6a"/><rect x="186" y="320" width="120" height="10" fill="#6a6a6a"/><rect x="600" y="320" width="124" height="10" fill="#6a6a6a"/><rect x="186" y="350" width="120" height="10" fill="#6a6a6a"/><rect x="600" y="350" width="124" height="10" fill="#6a6a6a"/><rect x="330" y="160" width="250" height="172" fill="#F6F6F6" stroke="#9a9a9a" stroke-width="6"/><path d="M300 140L300 335M610 140L610 335" fill="none" stroke="#555" stroke-width="8" stroke-linecap="square"/><text x="372" y="210" font-size="34" font-weight="bold" fill="#9A7CA8">YOUR TEXT</text><text x="415" y="255" font-size="34" font-weight="bold" fill="#7A7AA8">HERE</text><path d="M430 290h14l6-25 10 4-3 21h12v28h-39z" fill="#E8B43C"/><path d="M150 100L260 100L260 115L400 115L400 140L320 140L320 200L230 200L230 215L350 215M500 115L650 115L650 100L760 100M520 130L600 130L600 210L690 210" fill="none" stroke="#6DB3C8" stroke-width="7" stroke-linecap="square"/><path d="M150 390L250 390L250 380L400 380L400 360L320 360L320 310L270 310L270 290L230 290L230 300M250 275L350 275" fill="none" stroke="#E8804F" stroke-width="7" stroke-linecap="square"/><path d="M760 385L660 385L660 380L500 380L500 360L600 360L600 310L650 310L650 290L680 290M545 275L640 275" fill="none" stroke="#9A60C8" stroke-width="7" stroke-linecap="square"/><circle cx="112" cy="385" r="22" fill="#E8804F"/><rect x="85" y="85" width="40" height="35" fill="#8AC8D0"/><rect x="755" y="85" width="45" height="35" fill="#6AAFC8"/><path d="M755 395l45-35" stroke="#9A60C8" stroke-width="8"/><rect x="78" y="138" width="70" height="6" fill="#A8C8D0"/><rect x="78" y="160" width="45" height="6" fill="#D0C8A8"/><rect x="78" y="188" width="80" height="6" fill="#B8B0C0"/><rect x="78" y="208" width="45" height="6" fill="#C0C8D0"/><rect x="755" y="138" width="60" height="6" fill="#A8C8D8"/><rect x="755" y="160" width="45" height="6" fill="#D0C8A8"/><rect x="755" y="188" width="80" height="6" fill="#C0B0C0"/><rect x="755" y="208" width="40" height="6" fill="#C8C8D0"/><rect x="75" y="418" width="65" height="6" fill="#F0A890"/><rect x="75" y="440" width="50" height="6" fill="#C8C8C8"/><rect x="75" y="462" width="80" height="6" fill="#A0A0B0"/><rect x="75" y="490" width="50" height="6" fill="#A8A8C0"/><rect x="745" y="438" width="60" height="6" fill="#C8C0E0"/><rect x="745" y="465" width="80" height="6" fill="#C8B8D0"/><rect x="745" y="488" width="40" height="6" fill="#C0C0D8"/></g>
<g transform="translate(24 492) scale(0.09588)"><rect x="35" y="42" width="838" height="485" fill="#C6C6C6"/><rect x="46" y="53" width="816" height="463" fill="#FAFAFA"/><rect x="62" y="68" width="784" height="433" fill="#F1F1F1"/><path d="M212 185L212 405L700 405M212 340L370 340M370 270L370 340L650 340M355 205L655 205M650 240L650 405M420 165L420 205M545 340L545 370M600 345L600 380M232 210L232 240M272 300L300 300M655 180L655 215M390 355L390 375" fill="none" stroke="#666" stroke-width="7" stroke-linecap="square"/><path d="M185 178L305 178L305 215L240 215L240 265L305 265L305 325L245 325L245 320M305 325L360 325L360 258L515 258" fill="none" stroke="#E8783A" stroke-width="9" stroke-linecap="square"/><path d="M700 150L700 182L645 182L645 210L540 210L540 182L440 182L440 205L360 205L360 185L325 205L325 235L540 235L540 320L395 320" fill="none" stroke="#9A4CC8" stroke-width="9" stroke-linecap="square"/><path d="M395 318L535 318" fill="none" stroke="#3A3AA8" stroke-width="9" stroke-linecap="square"/><path d="M225 430L225 370L305 370L305 405L330 405L330 345L385 345L385 405L490 405L490 370L460 370L460 345L380 345L380 265L520 265" fill="none" stroke="#4AA8A8" stroke-width="8" stroke-linecap="square"/><path d="M730 395L665 395L665 350L690 350L690 285L645 285L645 255L570 255L570 320L620 320L620 385L570 385L570 370L515 370L515 330" fill="none" stroke="#5AAAD0" stroke-width="8" stroke-linecap="square"/><path d="M115 170l25-22 25 22v20h-50z" fill="#E8783A"/><rect x="178" y="170" width="18" height="16" fill="#E8783A"/><path d="M672 118l14 14 30-40" fill="none" stroke="#B080D8" stroke-width="10"/><path d="M752 378l40 36M792 378l-40 36" stroke="#5AA0C8" stroke-width="8"/><circle cx="728" cy="395" r="8" fill="#3E90C0"/><path d="M205 445v40M220 445v40M240 445v40" stroke="#5AAAA8" stroke-width="6"/><rect x="105" y="200" width="65" height="6" fill="#F0A888"/><rect x="105" y="218" width="80" height="6" fill="#B8B8B8"/><rect x="105" y="240" width="65" height="6" fill="#A8A8B8"/><rect x="735" y="95" width="65" height="6" fill="#C8B8E0"/><rect x="735" y="118" width="70" height="6" fill="#B0B0B0"/><rect x="735" y="138" width="55" height="6" fill="#A8A8B8"/><rect x="755" y="445" width="70" height="6" fill="#B8B8C8"/><rect x="755" y="465" width="80" height="6" fill="#A0A8B8"/><rect x="250" y="450" width="60" height="6" fill="#A8D0D0"/><rect x="250" y="470" width="100" height="6" fill="#B0B0B0"/><rect x="665" y="265" width="40" height="6" fill="#C8C8C8"/><rect x="420" y="290" width="80" height="6" fill="#B8A8A8"/></g>
<g transform="translate(24 556) scale(0.09588)" clip-path="url(#clip7)"><rect x="35" y="42" width="838" height="485" fill="#C6C6C6"/><rect x="46" y="53" width="816" height="463" fill="#FAFAFA"/><rect x="62" y="68" width="784" height="433" fill="#F1F1F1"/><circle cx="455" cy="290" r="205" fill="none" stroke="#555" stroke-width="8" stroke-dasharray="160 30"/><circle cx="455" cy="290" r="185" fill="none" stroke="#555" stroke-width="8" stroke-dasharray="110 25"/><circle cx="455" cy="290" r="165" fill="none" stroke="#555" stroke-width="8" stroke-dasharray="120 28"/><circle cx="455" cy="290" r="145" fill="none" stroke="#555" stroke-width="8" stroke-dasharray="80 22"/><circle cx="455" cy="290" r="125" fill="none" stroke="#555" stroke-width="8" stroke-dasharray="90 24"/><circle cx="455" cy="290" r="105" fill="none" stroke="#555" stroke-width="8" stroke-dasharray="60 20"/><circle cx="455" cy="290" r="85" fill="none" stroke="#555" stroke-width="8" stroke-dasharray="70 20"/><path d="M455 90L455 140M330 215L380 245M580 215L530 245M300 330L360 320M610 330L550 320M455 420L455 380" fill="none" stroke="#5A5A5A" stroke-width="8" stroke-linecap="square"/><path d="M440 300h12l5-20 9 3-3 17h10v22h-33z" fill="#E8B43C"/><path d="M130 232L210 232L330 185" fill="none" stroke="#E8783A" stroke-width="8" stroke-linecap="square"/><circle cx="210" cy="232" r="9" fill="#E8783A"/><circle cx="330" cy="185" r="8" fill="#E8783A"/><rect x="345" y="178" width="25" height="15" fill="#F0A888"/><path d="M590 195L690 145L770 145" fill="none" stroke="#C0303A" stroke-width="8" stroke-linecap="square"/><circle cx="690" cy="145" r="9" fill="#C0303A"/><circle cx="770" cy="145" r="9" fill="#C0303A"/><path d="M590 410L690 375L775 375" fill="none" stroke="#3AA0A0" stroke-width="8" stroke-linecap="square"/><circle cx="775" cy="375" r="9" fill="#3AA0A0"/><path d="M130 425L300 425L330 405" fill="none" stroke="#8A3AC0" stroke-width="8" stroke-linecap="square"/><rect x="130" y="215" width="70" height="6" fill="#C8D0D8"/><rect x="130" y="255" width="65" height="6" fill="#B8B8B8"/><rect x="130" y="285" width="45" height="6" fill="#E0B8A8"/><rect x="700" y="175" width="80" height="6" fill="#A8B0C0"/><rect x="700" y="200" width="40" height="6" fill="#E0B0B0"/><rect x="700" y="400" width="80" height="6" fill="#B0B8C0"/><rect x="700" y="355" width="70" height="6" fill="#A8D0D0"/></g>
<text transform="translate(12.73 247.10) scale(1.0244 1.0694)" font-size="15" fill="#444" style="font-kerning:none">2</text>
<polygon points="16.70,252.50 17.88,255.48 21.07,255.68 18.60,257.72 19.40,260.82 16.70,259.10 14.00,260.82 14.80,257.72 12.33,255.68 15.52,255.48" fill="#5A5A5A"/>
<rect x="11.00" y="254.50" width="1.3" height="1.1" fill="#6A6A6A"/><rect x="11.00" y="257.90" width="1.3" height="1.1" fill="#6A6A6A"/>
<text transform="translate(12.94 312.10) scale(0.9843 1.0694)" font-size="15" fill="#444" style="font-kerning:none">3</text>
<polygon points="16.70,317.50 17.88,320.48 21.07,320.68 18.60,322.72 19.40,325.82 16.70,324.10 14.00,325.82 14.80,322.72 12.33,320.68 15.52,320.48" fill="#5A5A5A"/>
<rect x="11.00" y="319.50" width="1.3" height="1.1" fill="#6A6A6A"/><rect x="11.00" y="322.90" width="1.3" height="1.1" fill="#6A6A6A"/>
<text transform="translate(13.18 377.10) scale(0.9261 1.0853)" font-size="15" fill="#444" style="font-kerning:none">4</text>
<polygon points="16.70,382.50 17.88,385.48 21.07,385.68 18.60,387.72 19.40,390.82 16.70,389.10 14.00,390.82 14.80,387.72 12.33,385.68 15.52,385.48" fill="#5A5A5A"/>
<rect x="11.00" y="384.50" width="1.3" height="1.1" fill="#6A6A6A"/><rect x="11.00" y="387.90" width="1.3" height="1.1" fill="#6A6A6A"/>
<text transform="translate(12.91 442.10) scale(0.9843 1.0853)" font-size="15" fill="#444" style="font-kerning:none">5</text>
<polygon points="16.70,447.50 17.88,450.48 21.07,450.68 18.60,452.72 19.40,455.82 16.70,454.10 14.00,455.82 14.80,452.72 12.33,450.68 15.52,450.48" fill="#5A5A5A"/>
<rect x="11.00" y="449.50" width="1.3" height="1.1" fill="#6A6A6A"/><rect x="11.00" y="452.90" width="1.3" height="1.1" fill="#6A6A6A"/>
<text transform="translate(12.73 507.10) scale(1.0114 1.0694)" font-size="15" fill="#444" style="font-kerning:none">6</text>
<polygon points="16.70,512.50 17.88,515.48 21.07,515.68 18.60,517.72 19.40,520.82 16.70,519.10 14.00,520.82 14.80,517.72 12.33,515.68 15.52,515.48" fill="#5A5A5A"/>
<rect x="11.00" y="514.50" width="1.3" height="1.1" fill="#6A6A6A"/><rect x="11.00" y="517.90" width="1.3" height="1.1" fill="#6A6A6A"/>
<text transform="translate(12.71 572.10) scale(1.0266 1.0853)" font-size="15" fill="#444" style="font-kerning:none">7</text>
<polygon points="16.70,577.50 17.88,580.48 21.07,580.68 18.60,582.72 19.40,585.82 16.70,584.10 14.00,585.82 14.80,582.72 12.33,580.68 15.52,580.48" fill="#5A5A5A"/>
<rect x="11.00" y="579.50" width="1.3" height="1.1" fill="#6A6A6A"/><rect x="11.00" y="582.90" width="1.3" height="1.1" fill="#6A6A6A"/>
<rect x="164" y="169" width="722" height="407" fill="#C9C9C9"/><rect x="885" y="170" width="1" height="405" fill="#DEDEDE"/>
<g transform="translate(164 169)"><rect x="1" y="1" width="720" height="405" fill="#F2F2F2"/>
<rect x="1" y="1" width="278" height="7" fill="#F8F8F8"/>
<rect x="306" y="1" width="415" height="7" fill="#F8F8F8"/>
<rect x="1" y="1" width="7" height="405" fill="#F8F8F8"/>
<rect x="715" y="1" width="6" height="405" fill="#F8F8F8"/>
<rect x="1" y="399" width="156" height="7" fill="#F8F8F8"/>
<rect x="204" y="399" width="143" height="7" fill="#F8F8F8"/>
<rect x="374" y="399" width="211" height="7" fill="#F8F8F8"/>
<rect x="612" y="399" width="109" height="7" fill="#F8F8F8"/>
<path d="M37.5 4.5L37.5 112.31M105.5 112.31L105.5 148.58M71.5 4.5L71.5 76.04M139.5 76.04L139.5 184.85M105.5 4.5L105.5 39.77M173.5 39.77L173.5 184.85M207.5 39.77L207.5 184.85M275.5 4.5L275.5 39.77M309.5 39.77L309.5 76.04M343.5 39.77L343.5 76.04M377.5 4.5L377.5 112.31M411.5 39.77L411.5 184.85M513.5 39.77L513.5 76.04M445.5 76.04L445.5 112.31M479.5 76.04L479.5 112.31M581.5 4.5L581.5 76.04M615.5 4.5L615.5 76.04M649.5 4.5L649.5 76.04M683.5 112.31L683.5 366.2M37.5 148.58L37.5 257.39M71.5 184.85L71.5 221.12M275.5 184.85L275.5 329.93M377.5 112.31L377.5 293.66M649.5 148.58L649.5 184.85M649.5 221.12L649.5 329.93M37.5 257.39L37.5 293.66M71.5 257.39L71.5 329.93M105.5 293.66L105.5 366.2M207.5 221.12L207.5 293.66M241.5 76.04L241.5 148.58M275.5 76.04L275.5 148.58M207.5 366.2L207.5 401.5M241.5 221.12L241.5 366.2M309.5 257.39L309.5 293.66M343.5 366.2L343.5 401.5M411.5 257.39L411.5 366.2M479.5 257.39L479.5 293.66M513.5 257.39L513.5 293.66M445.5 293.66L445.5 366.2M377.5 366.2L377.5 401.5M581.5 257.39L581.5 329.93M615.5 257.39L615.5 401.5M37.5 112.31L105.5 112.31M71.5 76.04L139.5 76.04M105.5 39.77L173.5 39.77M207.5 39.77L309.5 39.77M309.5 76.04L343.5 76.04M241.5 76.04L275.5 76.04M309.5 112.31L377.5 112.31M411.5 39.77L547.5 39.77M513.5 76.04L581.5 76.04M445.5 76.04L479.5 76.04M479.5 112.31L581.5 112.31M649.5 76.04L683.5 76.04M683.5 39.77L716.5 39.77M683.5 112.31L716.5 112.31M37.5 148.58L105.5 148.58M71.5 184.85L343.5 184.85M71.5 221.12L241.5 221.12M37.5 257.39L173.5 257.39M309.5 257.39L479.5 257.39M547.5 257.39L615.5 257.39M241.5 148.58L581.5 148.58M377.5 184.85L649.5 184.85M275.5 221.12L343.5 221.12M411.5 221.12L649.5 221.12M4.5 329.93L71.5 329.93M105.5 293.66L207.5 293.66M139.5 329.93L241.5 329.93M37.5 366.2L207.5 366.2M241.5 366.2L343.5 366.2M275.5 329.93L377.5 329.93M309.5 293.66L411.5 293.66M479.5 293.66L547.5 293.66M445.5 329.93L547.5 329.93M377.5 366.2L411.5 366.2M445.5 366.2L683.5 366.2" stroke="#F8F8F8" stroke-width="7" stroke-linecap="square" shape-rendering="crispEdges" fill="none"/>
<path d="M63.50 130.00 L63.50 301.50 Q63.50 304.50 66.50 304.50 L178.60 304.50 Q181.60 304.50 181.60 301.50 L181.60 234.90 Q181.60 231.90 184.60 231.90 L262.40 231.90 Q265.40 231.90 265.40 234.90 L265.40 301.50 Q265.40 304.50 268.40 304.50 L346.00 304.50 Q349.00 304.50 349.00 301.50 L349.00 205.80 Q349.00 202.80 352.00 202.80 L388.00 202.80 Q391.00 202.80 391.00 205.80 L391.00 262.30 Q391.00 265.30 394.00 265.30 L469.30 265.30 Q472.30 265.30 472.30 268.30 L472.30 335.50 Q472.30 338.50 475.30 338.50 L513.50 338.50 Q516.50 338.50 516.50 335.50 L516.50 207.20 Q516.50 204.20 519.50 204.20 L654.50 204.20 Q657.50 204.20 657.50 201.20 L657.50 130.00" fill="none" stroke="#4A4A4A" stroke-width="3" stroke-dasharray="3 3"/>
<circle cx="63.30000000000001" cy="110" r="15.2" fill="#7F7F7F"/>
<circle cx="656" cy="110.30000000000001" r="15.2" fill="#7F7F7F"/>
<text transform="translate(92.06 138.60) scale(1.2408 1.0548)" font-size="74" fill="#1B80A9" font-weight="bold" style="font-kerning:none">M</text>
<text transform="translate(167.01 138.60) scale(1.0232 1.0548)" font-size="74" fill="#FB6118" font-weight="bold" style="font-kerning:none">A</text>
<text transform="translate(220.27 138.60) scale(0.9225 1.0548)" font-size="74" fill="#781CA8" font-weight="bold" style="font-kerning:none">Z</text>
<text transform="translate(263.18 138.60) scale(0.7925 1.0548)" font-size="74" fill="#5DAAA9" font-weight="bold" style="font-kerning:none">E</text>
<text transform="translate(323.21 138.60) scale(0.9455 1.0548)" font-size="74" fill="#404040" font-weight="bold" style="font-kerning:none">T</text>
<text transform="translate(363.72 138.60) scale(1.0152 1.0548)" font-size="74" fill="#404040" font-weight="bold" style="font-kerning:none">O</text>
<text transform="translate(422.34 138.60) scale(1.0094 1.0548)" font-size="74" fill="#404040" font-weight="bold" style="font-kerning:none">O</text>
<text transform="translate(481.84 138.60) scale(0.8005 1.0548)" font-size="74" fill="#404040" font-weight="bold" style="font-kerning:none">L</text>
<text transform="translate(518.11 138.60) scale(0.8472 1.0548)" font-size="74" fill="#1B80A9" font-weight="bold" style="font-kerning:none">K</text>
<text transform="translate(564.75 138.60) scale(1.0414 1.0548)" font-size="74" fill="#1B80A9" font-weight="bold" style="font-kerning:none">I</text>
<text transform="translate(586.20 138.60) scale(0.9661 1.0548)" font-size="74" fill="#1B80A9" font-weight="bold" style="font-kerning:none">T</text>
<text transform="translate(178.85 170.40) scale(1.0694 0.9480)" font-size="23" fill="#404040" style="font-kerning:none">An Animated Presentation Toolkit</text></g>
<rect x="0" y="597" width="918" height="23" fill="#F1F1F1" />
<rect x="0" y="597" width="918" height="1" fill="#C9C9C9" />
<rect x="0" y="619" width="918" height="1" fill="#7a7a7a" />
<text transform="translate(8.68 612.00) scale(0.9865 1.0000)" font-size="11.5" fill="#555" style="font-kerning:none">Slide 1 of 21</text>
<g fill="none" stroke="#666" stroke-width="1.2"><path d="M96 601.6h-4.4v10h4.4l1.4 1.6 1.4-1.6h4.6v-2.2M103.6 603.2v-1.6h-4.4l-1.8 1.6v10"/></g><path d="M99.4 609.8l5-5 1.4 1.4-5 5-1.8.4z" fill="#666"/>
<text transform="translate(121.86 612.00) scale(0.9918 1.0000)" font-size="11.5" fill="#555" style="font-kerning:none">English (United States)</text>
<path d="M398.2 607.3h10.8M398.2 610.2h10.8M398.2 613.3h6" stroke="#6A6A6A" stroke-width="1.1"/><path d="M400.8 604.3l2.8-2.8 2.8 2.8z" fill="#6A6A6A"/>
<text transform="translate(413.33 612.00) scale(1.0250 1.0000)" font-size="11.5" fill="#555" style="font-kerning:none">Notes</text>
<path d="M465.2 602.1h11.9v8.1h-5.1l-1.6 3.6-1.6-3.6h-3.6z" fill="#6A6A6A"/>
<text transform="translate(480.73 612.00) scale(0.9689 1.0000)" font-size="11.5" fill="#555" style="font-kerning:none">Comments</text>
<rect x="554" y="598" width="38" height="21" fill="#CACACA" />
<g fill="none" stroke="#6A6A6A" stroke-width="1.2"><rect x="566.6" y="601.6" width="12.8" height="11.6"/><path d="M570 601.6v8.2M570 609.6h9.4"/><rect x="572.6" y="604.2" width="3.8" height="2.2"/></g>
<g fill="none" stroke="#6A6A6A" stroke-width="1.1"><rect x="604.6" y="601.9" width="4.6" height="3.6"/><rect x="613.1" y="601.9" width="4.6" height="3.6"/><rect x="604.6" y="609.6" width="4.6" height="3.6"/><rect x="613.1" y="609.6" width="4.6" height="3.6"/></g>
<g fill="none" stroke="#6A6A6A" stroke-width="1.1"><path d="M642.6 602.3l5.9 0.6 5.9-0.6v10l-5.9 0.6-5.9-0.6z"/><path d="M648.5 603v10.5" /><path d="M644.3 604.8h3M644.3 607h3M644.3 609.2h3M649.8 604.8h3M649.8 607h3M649.8 609.2h3" stroke-width="0.9"/></g><path d="M647 612.5l1.5 1.8 1.5-1.8z" fill="#6A6A6A"/>
<g fill="none" stroke="#6A6A6A" stroke-width="1.2"><path d="M680 602.6h13M681.9 602.8v6.3h9.2v-6.3M686.5 609.1v4.2M683.3 613.5h6.4M684 605.8h5"/></g>
<rect x="710.6" y="607" width="6.4" height="1.6" fill="#555" />
<rect x="721.3" y="607.3" width="99.5" height="1" fill="#AAAAAA" />
<rect x="771.5" y="604.5" width="1" height="6" fill="#AAAAAA" />
<rect x="747" y="602.4" width="3.8" height="10.6" fill="#555" />
<path d="M824.4 607.8h8.5M828.65 603.5v8.5" stroke="#555" stroke-width="1.8"/>
<text transform="translate(848.77 611.50) scale(0.9392 1.0000)" font-size="11.5" fill="#555" style="font-kerning:none">57 %</text>
<g fill="none" stroke="#6A6A6A" stroke-width="1"><rect x="885.5" y="601.5" width="13.5" height="13.5"/><path d="M892.2 603v3.5M892.2 610v3.5M887 608.2h3.5M894.5 608.2h3.5"/></g><path d="M890.7 605.8h3l-1.5 1.6zM890.7 610.6h3l-1.5-1.6zM889.8 606.7v3l1.6-1.5zM894.6 606.7v3l-1.6-1.5z" fill="#6A6A6A"/>
</svg>
</body></html>
